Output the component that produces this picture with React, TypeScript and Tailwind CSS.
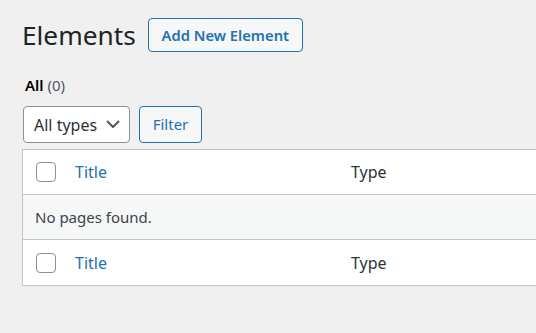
import React from "react";

const font = { fontFamily: '"Noto Sans", "Open Sans", sans-serif' };

function Checkbox() {
  return <div className="w-[20px] h-[20px] rounded-[4px] border border-[#8c8f94] bg-white shrink-0" />;
}

function HeadRow({ border }: { border: string }) {
  return (
    <div className={`flex items-center h-[45px] bg-white ${border}`}>
      <div className="w-[52px] pl-[13px] flex items-center">
        <Checkbox />
      </div>
      <div className="w-[276px] text-[16px] text-[#2271b1]">Title</div>
      <div className="text-[16px] text-[#2c3338]">Type</div>
    </div>
  );
}

export default function App() {
  return (
    <div className="w-[536px] h-[333px] overflow-hidden bg-[#f0f0f1]" style={font}>
      <div className="pl-[22px] pt-[18px]">
        <div className="flex items-center gap-[12px] h-[34px]">
          <h1 className="text-[26.25px] leading-[34px] text-[#1d2327] font-normal">Elements</h1>
          <button className="h-[34px] w-[155px] rounded-[4px] border border-[#2271b1] bg-[#f6f7f7] text-[#2271b1] text-[14.75px] font-semibold leading-none">
            Add New Element
          </button>
        </div>
        <div className="mt-[23px] pl-[3px] text-[15px] leading-[20px]">
          <span className="font-semibold text-[#000]">All</span>{" "}
          <span className="text-[#50575e]">(0)</span>
        </div>
        <div className="mt-[11px] flex items-center gap-[9px] pl-[1px]">
          <div className="w-[107px] h-[37px] rounded-[4px] border border-[#8c8f94] bg-white flex items-center justify-between pl-[10px] pr-[9px]">
            <span className="text-[16px] text-[#2c3338]">All types</span>
            <svg width="14" height="9" viewBox="0 0 14 9" fill="none">
              <path d="M1.5 1.5 L7 7 L12.5 1.5" stroke="#50575e" strokeWidth="2" strokeLinecap="round" strokeLinejoin="round" />
            </svg>
          </div>
          <button className="w-[63px] h-[37px] rounded-[4px] border border-[#2271b1] bg-[#f6f7f7] text-[#2271b1] text-[15px] leading-none">
            Filter
          </button>
        </div>
        <div className="mt-[6px] w-[600px] border border-[#c3c4c7]">
          <HeadRow border="border-b border-[#c3c4c7]" />
          <div className="h-[45px] bg-[#f6f7f7] flex items-center pl-[12px] text-[15px] text-[#3c434a] border-b border-[#c3c4c7]">
            No pages found.
          </div>
          <HeadRow border="" />
        </div>
      </div>
    </div>
  );
}
